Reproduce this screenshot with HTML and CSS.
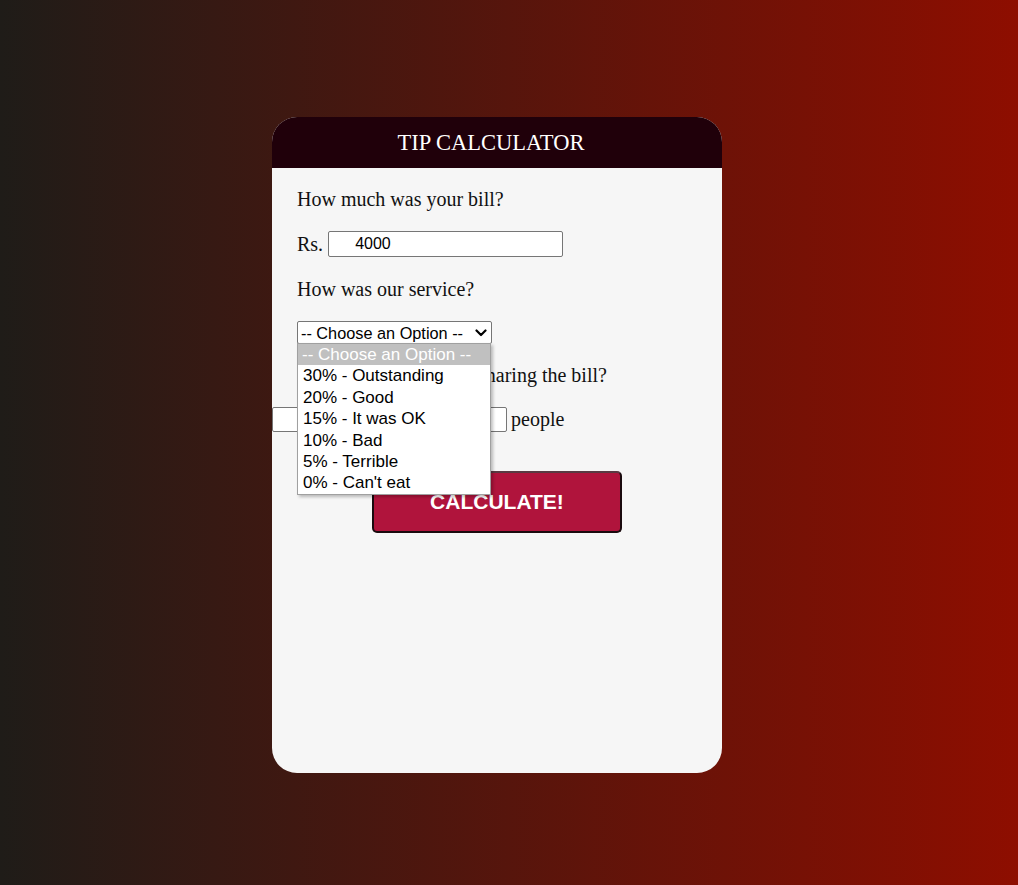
FILE: index.html
```html
<!DOCTYPE html>
<html>
<head>
<meta charset="utf-8">
<title>Tip Calculator</title>
<link rel="stylesheet" href="styles.css">
</head>
<body>
  <div class="card">
    <div class="card-header">TIP CALCULATOR</div>
    <div class="card-body">
      <p class="q">How much was your bill?</p>
      <div class="row bill-row">
        <span class="label">Rs.</span>
        <input class="field bill" type="text" value="4000">
      </div>
      <p class="q">How was our service?</p>
      <div class="select-wrap">
        <select class="service">
          <option>-- Choose an Option --</option>
          <option>30% - Outstanding</option>
          <option>20% - Good</option>
          <option>15% - It was OK</option>
          <option>10% - Bad</option>
          <option>5% - Terrible</option>
          <option>0% - Can't eat</option>
        </select>
        <svg class="chevron" width="12" height="8" viewBox="0 0 12 8"><path d="M1.5 1.5 L6 6 L10.5 1.5" fill="none" stroke="#000" stroke-width="2.2" stroke-linecap="round" stroke-linejoin="round"/></svg>
        <ul class="dropdown">
          <li class="active">-- Choose an Option --</li>
          <li>30% - Outstanding</li>
          <li>20% - Good</li>
          <li>15% - It was OK</li>
          <li>10% - Bad</li>
          <li>5% - Terrible</li>
          <li>0% - Can't eat</li>
        </ul>
      </div>
      <p class="q">How many people are sharing the bill?</p>
      <div class="row people-row">
        <input class="field people" type="text">
        <span class="label">people</span>
      </div>
      <div class="btn-row">
        <button class="calc">CALCULATE!</button>
      </div>
    </div>
  </div>
</body>
</html>
```

FILE: styles.css
```css
html, body {
  margin: 0;
  padding: 0;
  height: 100%;
}
body {
  background: linear-gradient(to right, #1f1c18, #8e0e00);
  font-family: "Liberation Serif", "Times New Roman", serif;
  color: #111;
  padding-top: 117px;
  box-sizing: border-box;
  overflow: hidden;
}
.card {
  width: 450px;
  height: 656px;
  margin-left: 272px;
  background: #f6f6f6;
  border-radius: 25px;
}
.card-header {
  height: 51px;
  background: #20000a;
  border-radius: 25px 25px 0 0;
  color: #fff;
  font-size: 22.5px;
  line-height: 51px;
  text-align: center;
  padding-right: 12px;
}
.card-body {
  padding: 20px 25px 0 25px;
}
.q {
  margin: 0;
  font-size: 20px;
  line-height: 23px;
}
.row {
  display: flex;
  align-items: center;
  font-size: 20px;
}
.bill-row {
  margin-top: 20px;
  margin-bottom: 21px;
}
.bill-row .label {
  margin-right: 5px;
}
.field {
  box-sizing: border-box;
  width: 235px;
  height: 26px;
  border: 1px solid #767676;
  border-radius: 2px;
  background: #fff;
  font-family: "Liberation Sans", Arial, sans-serif;
  font-size: 16px;
  color: #000;
  padding: 0 0 0 26px;
  margin: 0;
}
.select-wrap {
  position: relative;
  margin-top: 20px;
  margin-bottom: 20px;
  height: 23px;
}
.service {
  -webkit-appearance: none;
  appearance: none;
  box-sizing: border-box;
  width: 195px;
  height: 23px;
  font-family: "Liberation Sans", Arial, sans-serif;
  font-size: 16.3px;
  color: #000;
  background: #fff;
  border: 1px solid #767676;
  border-radius: 2px;
  padding: 0 0 0 3px;
  margin: 0;
}
.chevron {
  position: absolute;
  left: 178px;
  top: 8px;
  pointer-events: none;
}
.dropdown {
  position: absolute;
  left: 0;
  top: 22px;
  width: 194px;
  margin: 0;
  padding: 0;
  list-style: none;
  background: #fff;
  border: 1px solid #a0a0a0;
  box-sizing: border-box;
  box-shadow: 2px 2px 3px rgba(0, 0, 0, 0.25);
  font-family: "Liberation Sans", Arial, sans-serif;
  font-size: 17px;
  color: #000;
  z-index: 5;
}
.dropdown li {
  height: 21.4px;
  line-height: 21.4px;
  padding-left: 5px;
  white-space: nowrap;
}
.dropdown li.active {
  background: #c0c0c0;
  color: #fff;
  padding-left: 4px;
}
.people-row {
  margin-top: 20px;
  margin-left: -25px;
}
.people {
  height: 25px;
}
.people-row .label {
  margin-left: 4px;
}
.btn-row {
  display: flex;
  justify-content: center;
  margin-top: 39px;
}
.calc {
  width: 250px;
  height: 62px;
  background: #b0143c;
  color: #fff;
  font-family: "Liberation Sans", Arial, sans-serif;
  font-weight: bold;
  font-size: 21px;
  border: 2px solid #1a0a0e;
  border-top-color: #5a3a42;
  border-radius: 5px;
  padding: 0;
  margin: 0;
}
```
